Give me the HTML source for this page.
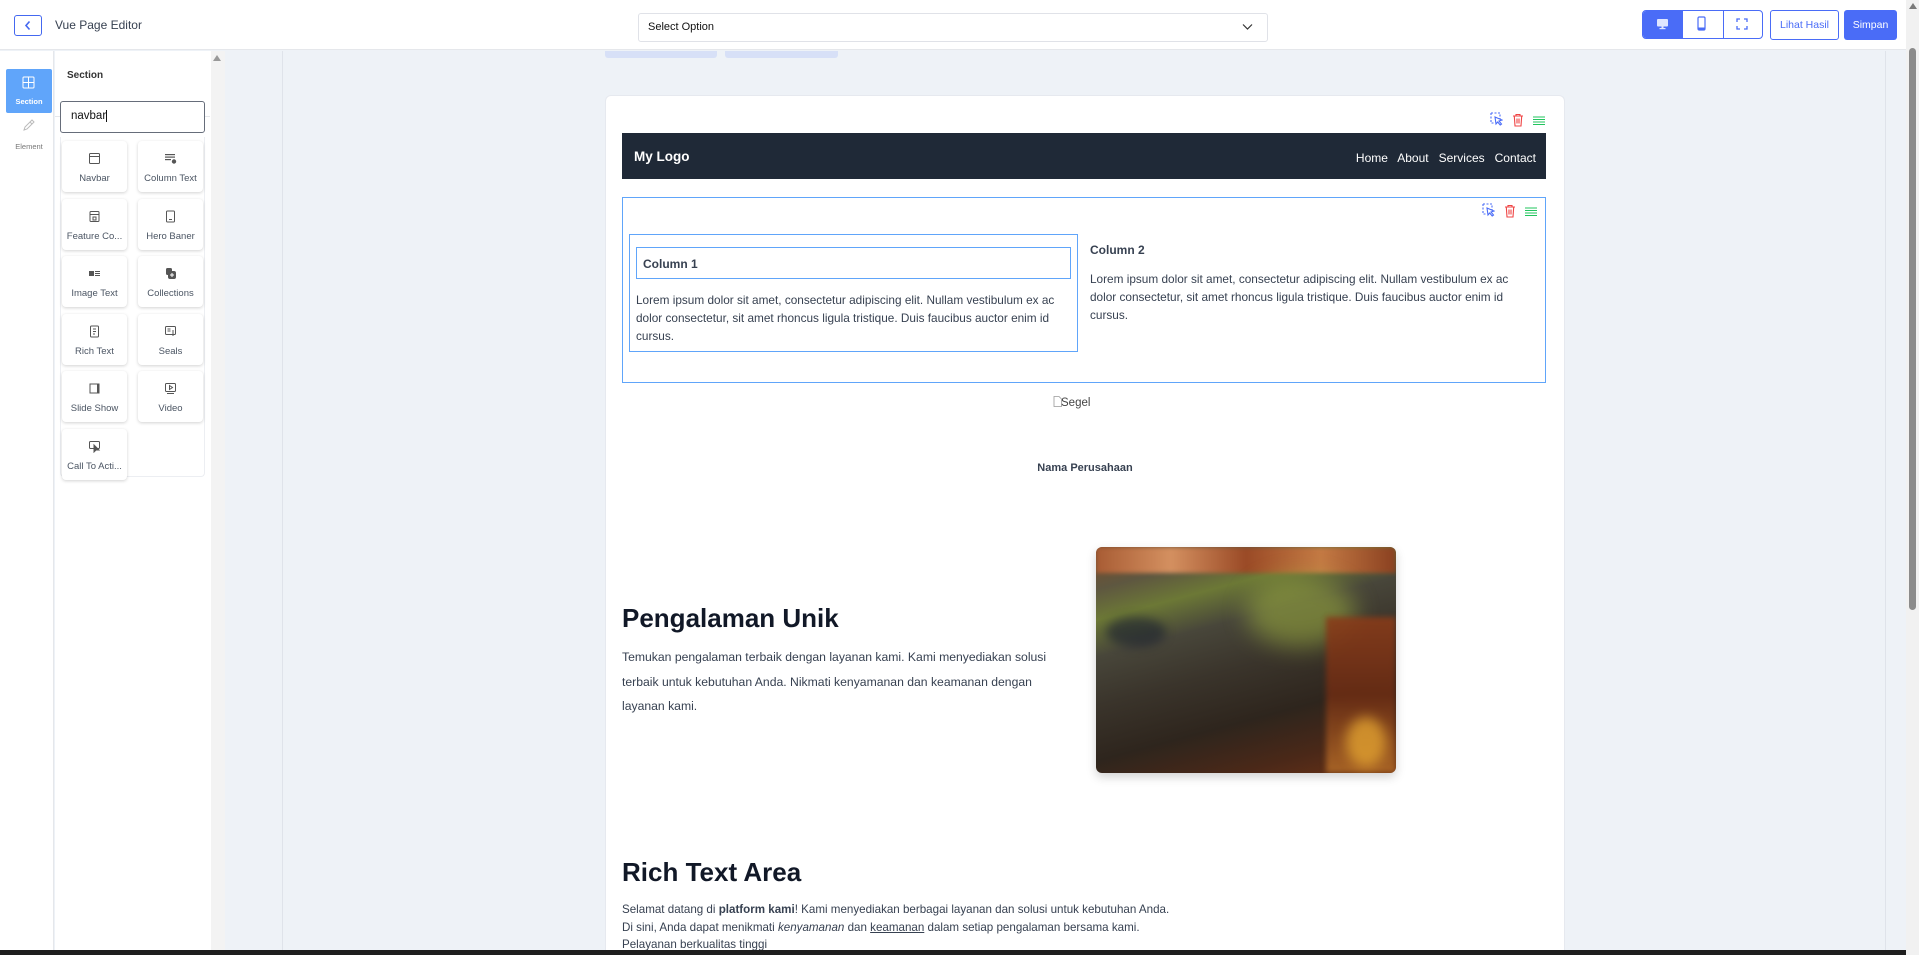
<!DOCTYPE html>
<html><head><meta charset="utf-8"><style>
*{box-sizing:border-box;margin:0;padding:0}
html,body{width:1919px;height:955px;overflow:hidden}
body{font-family:"Liberation Sans",sans-serif;background:#eef2f7;position:relative;color:#374151}
.abs{position:absolute}
.top{left:0;top:0;width:1906px;height:50px;background:#fff;border-bottom:1px solid #e5e7eb}
.card{width:65px;height:51px;background:#fff;border-radius:4px;box-shadow:0 1px 3px rgba(0,0,0,.18);font-size:9.5px;color:#4b5563;text-align:center}
.card svg{position:absolute;left:26px;top:11px}
.card span{position:absolute;left:0;right:0;top:32px;white-space:nowrap}
.p{font-size:11.8px;line-height:18px;color:#374151}
</style></head><body>
<div class="abs top"></div>
<div class="abs" style="left:14px;top:15px;width:28px;height:21px;border:1.3px solid #4468f0;border-radius:3px"></div>
<svg class="abs" style="left:23px;top:20px" width="10" height="11" viewBox="0 0 10 11"><path d="M6.5 1.5 L3 5.5 L6.5 9.5" stroke="#4468f0" stroke-width="1.6" fill="none"/></svg>
<div class="abs" style="left:55px;top:18px;font-size:12px;color:#374151">Vue Page Editor</div>
<div class="abs" style="left:638px;top:13px;width:630px;height:29px;border:1px solid #e0e2e8;border-radius:3px;background:#fff"></div>
<div class="abs" style="left:648px;top:21px;font-size:11px;color:#111">Select Option</div>
<svg class="abs" style="left:1242px;top:23px" width="11" height="8" viewBox="0 0 11 8"><path d="M1 1.5 L5.5 6 L10 1.5" stroke="#333" stroke-width="1.2" fill="none"/></svg>
<div class="abs" style="left:1642px;top:10px;width:121px;height:29px;border:1px solid #4a6cf7;border-radius:4px;background:#fff;overflow:hidden">
 <div class="abs" style="left:0;top:0;width:40px;height:29px;background:#4a6cf7"></div>
 <div class="abs" style="left:80px;top:0;width:1px;height:29px;background:#4a6cf7"></div>
</div>
<svg class="abs" style="left:1656px;top:18px" width="13" height="12" viewBox="0 0 13 12"><rect x="1" y="1" width="11" height="7.5" rx="1" fill="#dfe6ff"/><rect x="5.5" y="8.5" width="2" height="2" fill="#dfe6ff"/><rect x="3.5" y="10" width="6" height="1.2" fill="#dfe6ff"/></svg>
<svg class="abs" style="left:1697px;top:16px" width="9" height="15" viewBox="0 0 9 15"><rect x="1" y="1" width="7" height="13" rx="1.2" fill="none" stroke="#4a6cf7" stroke-width="1.2"/><rect x="1" y="11.5" width="7" height="2.5" fill="#4a6cf7"/></svg>
<svg class="abs" style="left:1736px;top:18px" width="12" height="12" viewBox="0 0 12 12" fill="none" stroke="#4a6cf7" stroke-width="1.3"><path d="M1 4V1h3M8 1h3v3M11 8v3H8M4 11H1V8"/></svg>
<div class="abs" style="left:1770px;top:10px;width:69px;height:30px;border:1px solid #4a6cf7;border-radius:3px;background:#fff;color:#4a6cf7;font-size:10.5px;text-align:center;line-height:28px">Lihat Hasil</div>
<div class="abs" style="left:1844px;top:10px;width:53px;height:30px;border-radius:3px;background:#4a6cf7;color:#fff;font-size:10.5px;text-align:center;line-height:30px">Simpan</div>
<div class="abs" style="left:1906px;top:0;width:13px;height:955px;background:#f1f1f1"></div>
<div class="abs" style="left:1909px;top:48px;width:7px;height:562px;background:#8b8b8b;border-radius:4px"></div>
<svg class="abs" style="left:1908px;top:2px" width="10" height="8"><path d="M5 1L9 7H1z" fill="#7a7a7a"/></svg>
<div class="abs" style="left:0;top:51px;width:54px;height:904px;background:#fff;border-right:1px solid #e5e7eb"></div>
<div class="abs" style="left:6px;top:69px;width:46px;height:44px;background:#60a5fa;border-radius:2px"></div>
<svg class="abs" style="left:22px;top:76px" width="13" height="13" viewBox="0 0 13 13" fill="none" stroke="#fff" stroke-width="1"><rect x="1" y="1" width="11" height="11" rx="1"/><path d="M6.5 1v11M1 6.5h11"/></svg>
<div class="abs" style="left:6px;top:97px;width:46px;text-align:center;font-size:7.5px;color:#fff;font-weight:bold">Section</div>
<svg class="abs" style="left:22px;top:119px" width="13" height="13" viewBox="0 0 13 13" fill="none" stroke="#bbb" stroke-width="1"><path d="M2 11l3-1 7-7-2-2-7 7zM8 3l2 2"/></svg>
<div class="abs" style="left:6px;top:142px;width:46px;text-align:center;font-size:7.5px;color:#777">Element</div>
<div class="abs" style="left:55px;top:51px;width:170px;height:904px;background:#fff;border-right:1px solid #e5e7eb"></div>
<div class="abs" style="left:211px;top:51px;width:14px;height:904px;background:#f3f3f3"></div>
<svg class="abs" style="left:212px;top:54px" width="10" height="8"><path d="M5 1L9 7H1z" fill="#999"/></svg>
<div class="abs" style="left:67px;top:70px;font-size:10px;font-weight:bold;color:#333">Section</div>
<div class="abs" style="left:55px;top:116px;width:155px;height:1px;background:#e5e7eb"></div>
<div class="abs" style="left:60px;top:101px;width:145px;height:32px;border:1px solid #666d7a;border-radius:3px;background:#fff"></div>
<div class="abs" style="left:71px;top:110px;font-size:11.5px;color:#111">navbar<span style="border-left:1px solid #111">&#8203;</span></div>
<div class="abs" style="left:60px;top:137px;width:145px;height:340px;border:1px solid #eceef2;border-top:none;border-radius:0 0 4px 4px"></div>

<div class="abs card" style="left:62px;top:141px"><svg width="13" height="13" viewBox="0 0 13 13" fill="none" stroke="#555" stroke-width="1"><rect x="1.5" y="1.5" width="10" height="10" rx="1"/><path d="M1.5 4.5h10"/></svg><span>Navbar</span></div>
<div class="abs card" style="left:138px;top:141px"><svg width="13" height="13" viewBox="0 0 13 13" fill="#555"><rect x="1" y="2" width="10" height="1.2"/><rect x="1" y="4.5" width="10" height="1.2"/><rect x="1" y="7" width="6" height="1.2"/><circle cx="10" cy="9.5" r="2.2"/></svg><span>Column Text</span></div>
<div class="abs card" style="left:62px;top:199px"><svg width="13" height="13" viewBox="0 0 13 13" fill="none" stroke="#555" stroke-width="1"><rect x="2" y="1.5" width="9" height="10" rx="1"/><path d="M2 4.5h9M5 7h3v3H5z"/></svg><span>Feature Co...</span></div>
<div class="abs card" style="left:138px;top:199px"><svg width="13" height="13" viewBox="0 0 13 13" fill="none" stroke="#555" stroke-width="1"><rect x="2.5" y="1" width="8" height="11" rx="1"/><path d="M5 9.5h3"/></svg><span>Hero Baner</span></div>
<div class="abs card" style="left:62px;top:256px"><svg width="13" height="13" viewBox="0 0 13 13" fill="#555"><rect x="1" y="4" width="5" height="5"/><rect x="7" y="4" width="5" height="1"/><rect x="7" y="6" width="5" height="1"/><rect x="7" y="8" width="5" height="1"/></svg><span>Image Text</span></div>
<div class="abs card" style="left:138px;top:256px"><svg width="13" height="13" viewBox="0 0 13 13" fill="#555"><rect x="2" y="1" width="6" height="7" rx="1.5"/><rect x="4" y="4" width="8" height="8" rx="2"/><path d="M8 6v4M6 8h4" stroke="#fff" stroke-width="1"/></svg><span>Collections</span></div>
<div class="abs card" style="left:62px;top:314px"><svg width="13" height="13" viewBox="0 0 13 13" fill="none" stroke="#555" stroke-width="1"><rect x="2.5" y="1" width="8" height="11" rx="1"/><path d="M5 4h3M5 6.5h3M5 9h2"/></svg><span>Rich Text</span></div>
<div class="abs card" style="left:138px;top:314px"><svg width="13" height="13" viewBox="0 0 13 13" fill="none" stroke="#555" stroke-width="1"><rect x="1.5" y="1.5" width="10" height="8" rx="1"/><path d="M3.5 4h3M3.5 6h3M9 5v6"/></svg><span>Seals</span></div>
<div class="abs card" style="left:62px;top:371px"><svg width="13" height="13" viewBox="0 0 13 13" fill="none" stroke="#555" stroke-width="1"><rect x="2" y="2" width="9" height="9"/><path d="M10 2v9" stroke-width="2"/></svg><span>Slide Show</span></div>
<div class="abs card" style="left:138px;top:371px"><svg width="13" height="13" viewBox="0 0 13 13" fill="none" stroke="#555" stroke-width="1"><rect x="1.5" y="1.5" width="10" height="8" rx="1"/><path d="M5.5 3.5l3 2-3 2z M3 11.5h7"/></svg><span>Video</span></div>
<div class="abs card" style="left:62px;top:429px"><svg width="13" height="13" viewBox="0 0 13 13" fill="none" stroke="#555" stroke-width="1"><rect x="1.5" y="1.5" width="10" height="7" rx="1"/><path d="M6 5v7l2-2h3z" fill="#555"/></svg><span>Call To Acti...</span></div>

<div class="abs" style="left:282px;top:51px;width:1px;height:904px;background:#dfe3ea"></div>
<div class="abs" style="left:1885px;top:51px;width:1px;height:904px;background:#dfe3ea"></div>
<div class="abs" style="left:605px;top:51px;width:112px;height:7px;background:#d7e0f7;border-radius:0 0 3px 3px"></div>
<div class="abs" style="left:725px;top:51px;width:113px;height:7px;background:#d7e0f7;border-radius:0 0 3px 3px"></div>
<div class="abs" style="left:605px;top:95px;width:960px;height:860px;background:#fff;border:1px solid #e6e9ef;border-bottom:none;border-radius:6px 6px 0 0"></div>

<svg class="abs" style="left:1490px;top:112px" width="13" height="15" viewBox="0 0 13 15" fill="none" stroke="#4a6cf7" stroke-width="1.1"><path d="M1 1h9v6" stroke-dasharray="2 1.5"/><path d="M1 1v10h4" stroke-dasharray="2 1.5"/><path d="M5 5l7 3-3 1 2.5 3-1.3 1L7.7 10 6 12z"/></svg>
<svg class="abs" style="left:1512px;top:113px" width="12" height="14" viewBox="0 0 12 14" fill="none" stroke="#ef4444" stroke-width="1.1"><path d="M1 3h10M4 3V1.5h4V3M2.3 3l.7 10h6l.7-10M5 5.5v5M7 5.5v5"/></svg>
<svg class="abs" style="left:1533px;top:116px" width="12" height="9" viewBox="0 0 12 9" stroke="#22c55e" stroke-width="1"><path d="M0 1h12M0 3.5h12M0 6h12M0 8.5h12"/></svg>

<div class="abs" style="left:622px;top:133px;width:924px;height:46px;background:#1f2937"></div>
<div class="abs" style="left:634px;top:149px;font-size:13.5px;font-weight:bold;color:#fff">My Logo</div>
<div class="abs" style="left:1340px;top:151px;width:196px;font-size:12px;color:#fff;text-align:right">Home&nbsp;&nbsp; About&nbsp;&nbsp; Services&nbsp;&nbsp; Contact</div>

<div class="abs" style="left:622px;top:197px;width:924px;height:186px;border:1px solid #60a5fa"></div>
<svg class="abs" style="left:1482px;top:203px" width="13" height="15" viewBox="0 0 13 15" fill="none" stroke="#4a6cf7" stroke-width="1.1"><path d="M1 1h9v6" stroke-dasharray="2 1.5"/><path d="M1 1v10h4" stroke-dasharray="2 1.5"/><path d="M5 5l7 3-3 1 2.5 3-1.3 1L7.7 10 6 12z"/></svg>
<svg class="abs" style="left:1504px;top:204px" width="12" height="14" viewBox="0 0 12 14" fill="none" stroke="#ef4444" stroke-width="1.1"><path d="M1 3h10M4 3V1.5h4V3M2.3 3l.7 10h6l.7-10M5 5.5v5M7 5.5v5"/></svg>
<svg class="abs" style="left:1525px;top:207px" width="12" height="9" viewBox="0 0 12 9" stroke="#22c55e" stroke-width="1"><path d="M0 1h12M0 3.5h12M0 6h12M0 8.5h12"/></svg>

<div class="abs" style="left:629px;top:234px;width:449px;height:118px;border:1px solid #60a5fa"></div>
<div class="abs" style="left:636px;top:247px;width:435px;height:32px;border:1px solid #60a5fa"></div>
<div class="abs" style="left:643px;top:257px;font-size:12px;font-weight:bold;color:#374151">Column 1</div>
<div class="abs p" style="left:636px;top:291px;width:440px">Lorem ipsum dolor sit amet, consectetur adipiscing elit. Nullam vestibulum ex ac dolor consectetur, sit amet rhoncus ligula tristique. Duis faucibus auctor enim id cursus.</div>
<div class="abs" style="left:1090px;top:243px;font-size:12px;font-weight:bold;color:#374151">Column 2</div>
<div class="abs p" style="left:1090px;top:270px;width:445px">Lorem ipsum dolor sit amet, consectetur adipiscing elit. Nullam vestibulum ex ac dolor consectetur, sit amet rhoncus ligula tristique. Duis faucibus auctor enim id cursus.</div>

<svg class="abs" style="left:1053px;top:396px" width="9" height="11" viewBox="0 0 9 11" fill="none" stroke="#999" stroke-width=".8"><path d="M1 .5h5l2.5 2.5v7.5H1z"/></svg>
<div class="abs" style="left:1061px;top:397px;font-size:11.5px;color:#444">Segel</div>
<div class="abs" style="left:1000px;top:462px;width:170px;text-align:center;font-size:11px;font-weight:bold;color:#374151">Nama Perusahaan</div>

<div class="abs" style="left:622px;top:603px;font-size:26px;font-weight:bold;color:#111827">Pengalaman Unik</div>
<div class="abs" style="left:622px;top:645px;width:450px;font-size:12.2px;line-height:24.5px;color:#374151">Temukan pengalaman terbaik dengan layanan kami. Kami menyediakan solusi terbaik untuk kebutuhan Anda. Nikmati kenyamanan dan keamanan dengan layanan kami.</div>

<div class="abs" style="left:1096px;top:547px;width:300px;height:226px;border-radius:6px;overflow:hidden;box-shadow:0 4px 10px rgba(0,0,0,.18);background:linear-gradient(165deg,#7a4a2a 0%,#5e5740 14%,#6c7836 24%,#48463a 36%,#3a342b 52%,#2e251d 70%,#4a2818 86%,#6a3216 100%)">
 <div class="abs" style="left:0;top:0;width:300px;height:26px;background:linear-gradient(90deg,#a85c34,#d49060,#9a4a26,#c47a44,#8a4020);filter:blur(2px)"></div>
 <div class="abs" style="left:150px;top:30px;width:110px;height:70px;background:#a4b840;opacity:.5;filter:blur(12px);border-radius:50%"></div>
 <div class="abs" style="left:230px;top:70px;width:70px;height:156px;background:linear-gradient(180deg,#8a3c1a,#6a2c14 50%,#b06a28);opacity:.9;filter:blur(3px)"></div>
 <div class="abs" style="left:250px;top:170px;width:40px;height:50px;background:#e0a030;opacity:.8;filter:blur(6px);border-radius:50%"></div>
 <div class="abs" style="left:10px;top:70px;width:60px;height:30px;background:#1a2030;opacity:.6;filter:blur(5px);border-radius:50%"></div>
</div>

<div class="abs" style="left:622px;top:857px;font-size:26px;font-weight:bold;color:#111827">Rich Text Area</div>
<div class="abs" style="left:622px;top:901px;font-size:11.6px;line-height:17.5px;color:#374151">Selamat datang di <b>platform kami</b>! Kami menyediakan berbagai layanan dan solusi untuk kebutuhan Anda.<br>Di sini, Anda dapat menikmati <i>kenyamanan</i> dan <u>keamanan</u> dalam setiap pengalaman bersama kami.<br>Pelayanan berkualitas tinggi</div>

<div class="abs" style="left:0;top:950px;width:1906px;height:5px;background:#1e1e1e"></div>
</body></html>
